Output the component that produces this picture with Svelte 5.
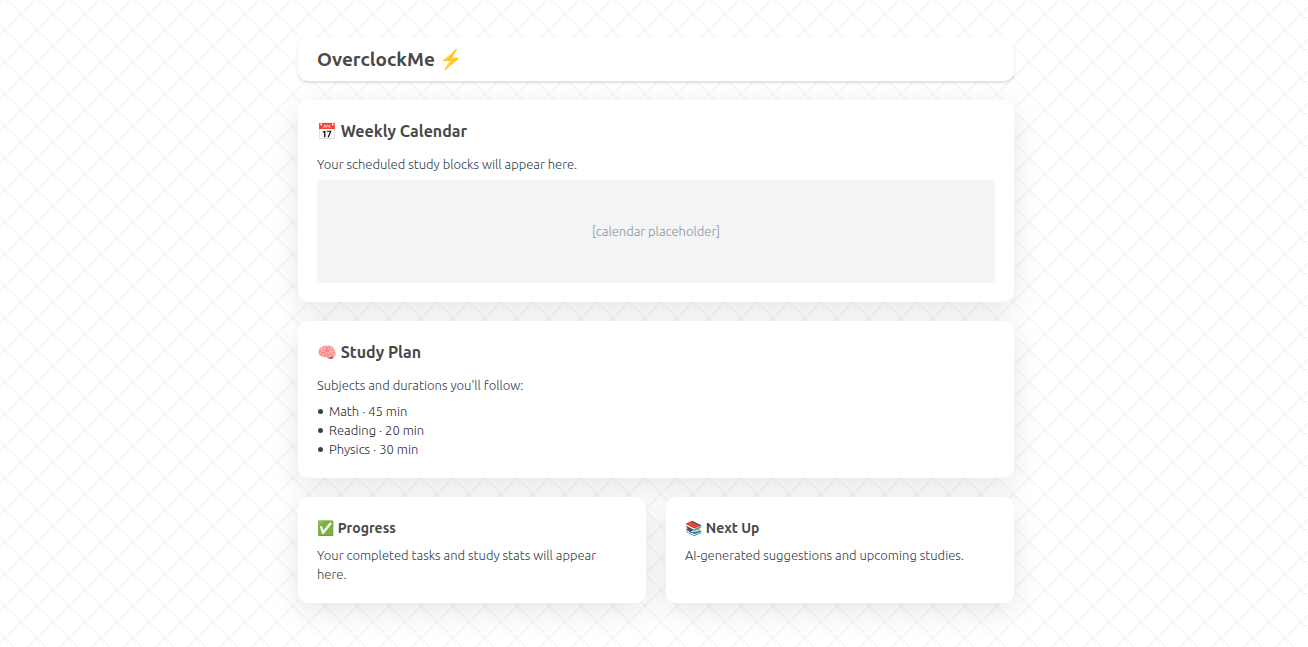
<script>
  const plan = [
    { subject: 'Math', minutes: 45 },
    { subject: 'Reading', minutes: 20 },
    { subject: 'Physics', minutes: 30 },
  ];
</script>

<main>
  <header>
    <h1>OverclockMe <span class="emoji">⚡</span></h1>
  </header>

  <section class="card">
    <h2><span class="emoji">📅</span> Weekly Calendar</h2>
    <p>Your scheduled study blocks will appear here.</p>
    <div class="calendar">[calendar placeholder]</div>
  </section>

  <section class="card">
    <h2><span class="emoji">🧠</span> Study Plan</h2>
    <p>Subjects and durations you'll follow:</p>
    <ul>
      {#each plan as item}
        <li>{item.subject} · {item.minutes} min</li>
      {/each}
    </ul>
  </section>

  <div class="pair">
    <section class="card">
      <h3><span class="emoji">✅</span> Progress</h3>
      <p>Your completed tasks and study stats will appear here.</p>
    </section>
    <section class="card">
      <h3><span class="emoji">📚</span> Next Up</h3>
      <p>AI-generated suggestions and upcoming studies.</p>
    </section>
  </div>
</main>

<style>
  :global(body) {
    background-color: #fff;
    background-image: url("data:image/svg+xml,%3Csvg xmlns='http://www.w3.org/2000/svg' width='32' height='32' shape-rendering='crispEdges'%3E%3Cpath d='M-2 -2L34 34M-2 34L34 -2' stroke='%23e7e7e7' stroke-width='0.8'/%3E%3C/svg%3E");
    background-position: 5px 30px;
  }

  main {
    box-sizing: border-box;
    max-width: 756px;
    margin: 0 auto;
    padding: 37px 18px 40px 22px;
    display: flex;
    flex-direction: column;
    gap: 19px;
    color: #484848;
    font-family: Ubuntu, 'Noto Sans', sans-serif;
    font-size: 13px;
    font-weight: 300;
    line-height: 19px;
  }

  .emoji {
    font-family: 'Noto Color Emoji', sans-serif;
  }

  header,
  .card {
    background: #fff;
    border-radius: 10px;
  }

  header {
    padding: 9px 19px 8px;
    box-shadow: 0 2px 3px rgb(0 0 0 / 0.13);
  }

  .card {
    padding: 19px;
    box-shadow: 0 8px 30px rgb(0 0 0 / 0.1);
  }

  h1,
  h2,
  h3,
  p,
  ul {
    margin: 0;
  }

  h1,
  h2,
  h3 {
    font-weight: 600;
  }

  h1 {
    font-size: 19px;
    line-height: 27px;
  }

  h2 {
    margin-bottom: 11px;
    font-size: 16px;
    line-height: 24px;
  }

  h3 {
    margin-bottom: 6px;
    font-size: 14px;
    line-height: 24px;
  }

  p {
    color: #2f3a48;
  }

  .calendar {
    display: flex;
    align-items: center;
    justify-content: center;
    height: 103px;
    margin-top: 6px;
    border-radius: 5px;
    background: #f3f4f6;
    color: #8691a0;
  }

  ul {
    margin-top: 7px;
    padding: 0;
    list-style: none;
    color: #1f2937;
  }

  li {
    display: flex;
    align-items: center;
    gap: 6px;
    padding-left: 1px;
  }

  li::before {
    content: '';
    width: 5px;
    height: 5px;
    border-radius: 50%;
    background: #374151;
  }

  .pair {
    display: grid;
    grid-template-columns: 1fr 1fr;
    gap: 20px;
  }

  @media (max-width: 560px) {
    .pair {
      grid-template-columns: 1fr;
    }
  }
</style>
